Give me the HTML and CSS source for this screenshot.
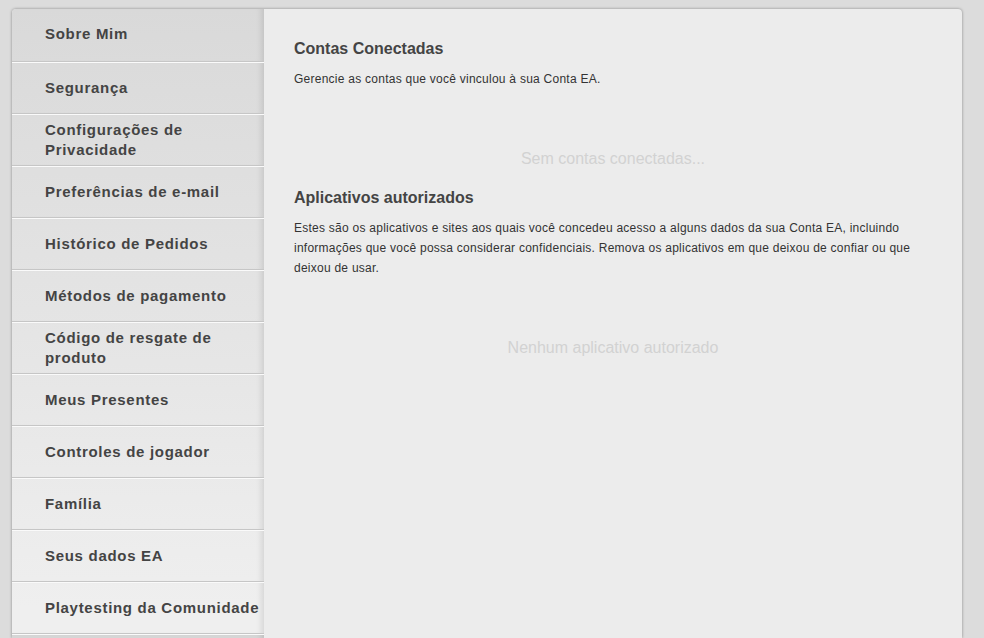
FILE: index.html
```html
<!DOCTYPE html>
<html lang="pt-BR">
<head>
  <meta charset="UTF-8">
  <meta name="viewport" content="width=device-width, initial-scale=1.0">
  <title>Conta EA</title>
  <link rel="stylesheet" href="styles.css">
</head>
<body>
  <div class="card">
    <!-- Menu laterale -->
    <nav class="sidebar">
      <a class="nav-item" href="#">Sobre Mim</a>
      <a class="nav-item" href="#">Segurança</a>
      <a class="nav-item" href="#">Configurações de<br>Privacidade</a>
      <a class="nav-item" href="#">Preferências de e-mail</a>
      <a class="nav-item" href="#">Histórico de Pedidos</a>
      <a class="nav-item" href="#">Métodos de pagamento</a>
      <a class="nav-item" href="#">Código de resgate de<br>produto</a>
      <a class="nav-item" href="#">Meus Presentes</a>
      <a class="nav-item" href="#">Controles de jogador</a>
      <a class="nav-item" href="#">Família</a>
      <a class="nav-item" href="#">Seus dados EA</a>
      <a class="nav-item" href="#">Playtesting da Comunidade</a>
      <a class="nav-item" href="#"></a>
    </nav>

    <!-- Contenuto -->
    <main class="content">
      <section class="block">
        <h2 class="block-title">Contas Conectadas</h2>
        <p class="block-text">Gerencie as contas que você vinculou à sua Conta EA.</p>
        <div class="empty">Sem contas conectadas...</div>
      </section>

      <section class="block">
        <h2 class="block-title">Aplicativos autorizados</h2>
        <p class="block-text">Estes são os aplicativos e sites aos quais você concedeu acesso a alguns dados da sua Conta EA, incluindo informações que você possa considerar confidenciais. Remova os aplicativos em que deixou de confiar ou que deixou de usar.</p>
        <div class="empty">Nenhum aplicativo autorizado</div>
      </section>
    </main>
  </div>
</body>
</html>
```

FILE: styles.css
```css
/* Generale */
html, body {
  height: 100%;
}

body {
  margin: 0;
  padding: 9px 0 0 12px;
  background: #dcdcdc;
  overflow: hidden;
  font-family: "Liberation Sans", Arial, sans-serif;
  color: #444;
  box-sizing: border-box;
}

/* Scheda principale (continua oltre il bordo inferiore) */
.card {
  display: flex;
  width: 950px;
  height: 100%;
  background: #ececec;
  border-radius: 4px 4px 0 0;
  box-shadow: 0 0 3px rgba(0, 0, 0, 0.4);
  overflow: hidden;
}

/* Menu laterale */
.sidebar {
  display: flex;
  flex-direction: column;
  width: 252px;
  flex-shrink: 0;
  overflow: hidden;
  background: linear-gradient(to bottom, #d9d9d9, #efefef 95%);
}

.nav-item {
  display: flex;
  align-items: center;
  flex-shrink: 0;
  height: 50px;
  padding-left: 33px;
  border-top: 1px solid #fafafa;
  border-bottom: 1px solid #c6c6c6;
  box-shadow: inset -7px 0 6px -5px rgba(0, 0, 0, 0.12);
  font-size: 15px;
  font-weight: bold;
  letter-spacing: 0.7px;
  line-height: 20px;
  color: #444;
  text-decoration: none;
  white-space: nowrap;
}

.nav-item:first-child {
  padding-bottom: 2px;
  border-top: none;
}

.nav-item:last-child {
  background: #d6d6d6;
}

/* Contenuto */
.content {
  flex: 1;
  padding: 30px 30px 0 30px;
}

.block-title {
  margin: 0;
  font-size: 16px;
  font-weight: bold;
  line-height: 20px;
  color: #444;
}

.block-text {
  margin: 10px 0 0 0;
  font-size: 12px;
  letter-spacing: 0.25px;
  line-height: 20px;
  color: #333;
}

.empty {
  padding: 60px 0 19px;
  text-align: center;
  font-size: 16px;
  line-height: 20px;
  color: #d2d2d2;
}
```
